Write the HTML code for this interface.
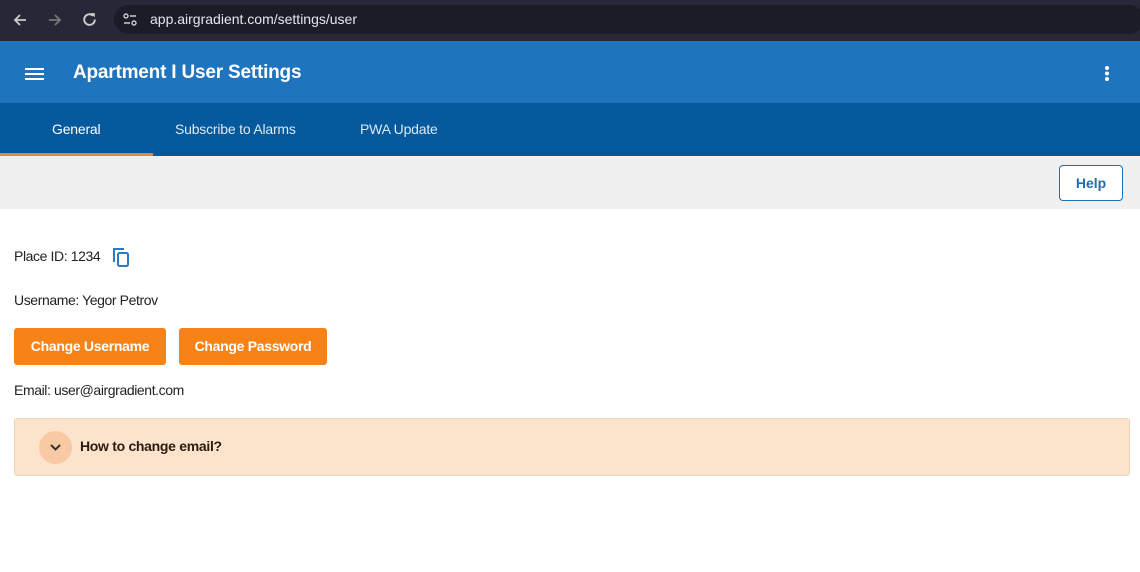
<!DOCTYPE html>
<html><head><style>
*{margin:0;padding:0;box-sizing:border-box}
body{width:1140px;height:572px;overflow:hidden;background:#fff;font-family:"Liberation Sans",sans-serif;position:relative}
.chrome{position:absolute;left:0;top:0;width:1140px;height:41px;background:#262838}
.url{position:absolute;left:114px;top:5px;width:1030px;height:29px;border-radius:15px;background:#1b1c28}
.url span{position:absolute;left:36px;top:6px;color:#e6e6ea;font-size:14px}
.app{position:absolute;top:41px;left:0;width:1140px;height:62px;background:#1f74be}
.app h1{position:absolute;left:73px;top:21px;color:#fff;font-size:19px;font-weight:bold;letter-spacing:-0.2px}
.tabs{position:absolute;top:103px;left:0;width:1140px;height:53px;background:#04589c}
.tab{position:absolute;top:18px;color:#dce8f4;font-size:14px;letter-spacing:-0.2px}
.ind{position:absolute;left:0;bottom:0;width:153px;height:3px;background:#e38a3a}
.gray{position:absolute;top:156px;left:0;width:1140px;height:53px;background:#f0f0f0}
.help{position:absolute;left:1059px;top:9px;width:64px;height:36px;border:1px solid #1f6fb0;border-radius:4px;background:#fff;color:#1f6fb0;font-weight:bold;font-size:14px;text-align:center;line-height:34px}
.t{position:absolute;left:14px;color:#222;font-size:14px;letter-spacing:-0.4px}
.btn{position:absolute;top:328px;height:37px;background:#f78316;color:#fff;font-weight:bold;font-size:14px;border-radius:3px;line-height:37px;text-align:center;letter-spacing:-0.3px}
.acc{position:absolute;left:14px;top:418px;width:1116px;height:58px;background:#fbe3cc;border:1px solid #f3d3b3;border-radius:3px}
.circ{position:absolute;left:24px;top:12px;width:33px;height:33px;border-radius:50%;background:#f8c9a3}
</style></head><body>
<div class="chrome">
<svg style="position:absolute;left:12px;top:12px" width="16" height="16" viewBox="0 0 16 16"><path d="M14 8H3M8 3L3 8l5 5" stroke="#ccc" stroke-width="1.8" fill="none"/></svg>
<svg style="position:absolute;left:47px;top:12px" width="16" height="16" viewBox="0 0 16 16"><path d="M2 8h11M8 3l5 5-5 5" stroke="#777" stroke-width="1.8" fill="none"/></svg>
<svg style="position:absolute;left:81px;top:11px" width="17" height="17" viewBox="0 0 16 16"><path d="M13 8A5 5 0 1 1 11.5 4.5" stroke="#ccc" stroke-width="1.8" fill="none"/><path d="M9 2h4v4z" fill="#ccc"/></svg>
<div class="url"><svg style="position:absolute;left:9px;top:8px" width="14" height="13" viewBox="0 0 14 13"><circle cx="3" cy="3" r="2" stroke="#ccc" fill="none" stroke-width="1.4"/><path d="M7 3h6M1 10h6" stroke="#ccc" stroke-width="1.4"/><circle cx="11" cy="10" r="2" stroke="#ccc" fill="none" stroke-width="1.4"/></svg><span>app.airgradient.com/settings/user</span></div>
</div>
<div class="app">
<svg style="position:absolute;left:25px;top:26px" width="19" height="14"><path d="M0 2h19M0 7h19M0 12h19" stroke="#fff" stroke-width="2"/></svg>
<h1>Apartment I User Settings</h1>
<svg style="position:absolute;left:1104px;top:24px" width="6" height="17"><circle cx="3" cy="3" r="2" fill="#fff"/><circle cx="3" cy="8.5" r="2" fill="#fff"/><circle cx="3" cy="14" r="2" fill="#fff"/></svg>
</div>
<div class="tabs">
<div class="tab" style="left:52px;color:#fff">General</div>
<div class="tab" style="left:175px">Subscribe to Alarms</div>
<div class="tab" style="left:360px">PWA Update</div>
<div class="ind"></div>
</div>
<div class="gray"><div class="help">Help</div></div>
<div class="t" style="top:248px">Place ID: 1234</div>
<svg style="position:absolute;left:112px;top:247px" width="18" height="20" viewBox="0 0 18 20"><path d="M2 15V2h10" stroke="#2a7bc4" stroke-width="2" fill="none"/><rect x="6" y="6" width="10" height="13" rx="1.5" stroke="#2a7bc4" stroke-width="2" fill="none"/></svg>
<div class="t" style="top:292px">Username: Yegor Petrov</div>
<div class="btn" style="left:14px;width:152px">Change Username</div>
<div class="btn" style="left:179px;width:148px">Change Password</div>
<div class="t" style="top:382px">Email: user@airgradient.com</div>
<div class="acc"><div class="circ"><svg style="position:absolute;left:11px;top:13px" width="11" height="8"><path d="M1 1l4.5 4.5L10 1" stroke="#333" stroke-width="2" fill="none"/></svg></div>
<div style="position:absolute;left:65px;top:19px;font-weight:bold;font-size:14px;color:#2a1a10;letter-spacing:-0.3px">How to change email?</div></div>
</body></html>
